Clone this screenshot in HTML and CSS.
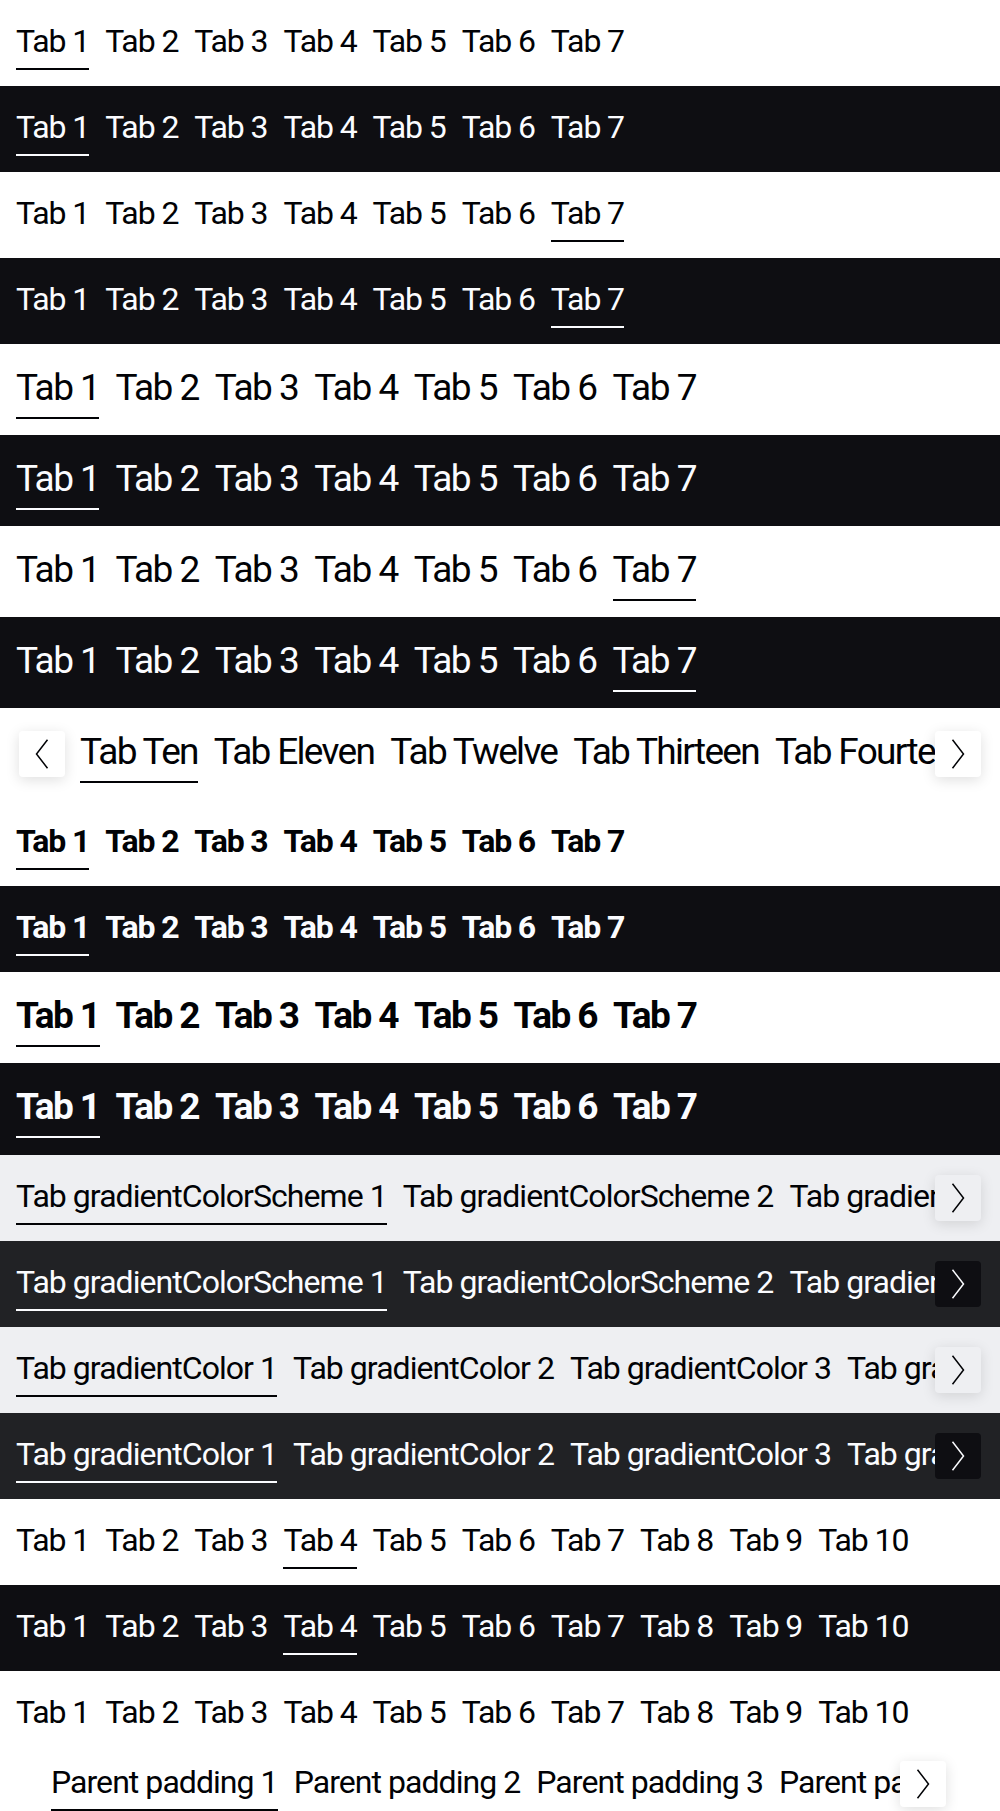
FILE: index.html
```html
<!DOCTYPE html>
<html lang="en">
<head>
<meta charset="utf-8">
<title>Tabs Bar</title>
<link rel="stylesheet" href="styles.css">
</head>
<body>

<div class="row light"><div class="bar small"><span class="tab active">Tab 1</span><span class="tab">Tab 2</span><span class="tab">Tab 3</span><span class="tab">Tab 4</span><span class="tab">Tab 5</span><span class="tab">Tab 6</span><span class="tab">Tab 7</span></div></div>
<div class="row dark"><div class="bar small"><span class="tab active">Tab 1</span><span class="tab">Tab 2</span><span class="tab">Tab 3</span><span class="tab">Tab 4</span><span class="tab">Tab 5</span><span class="tab">Tab 6</span><span class="tab">Tab 7</span></div></div>
<div class="row light"><div class="bar small"><span class="tab">Tab 1</span><span class="tab">Tab 2</span><span class="tab">Tab 3</span><span class="tab">Tab 4</span><span class="tab">Tab 5</span><span class="tab">Tab 6</span><span class="tab active">Tab 7</span></div></div>
<div class="row dark"><div class="bar small"><span class="tab">Tab 1</span><span class="tab">Tab 2</span><span class="tab">Tab 3</span><span class="tab">Tab 4</span><span class="tab">Tab 5</span><span class="tab">Tab 6</span><span class="tab active">Tab 7</span></div></div>

<div class="row light"><div class="bar medium"><span class="tab active">Tab 1</span><span class="tab">Tab 2</span><span class="tab">Tab 3</span><span class="tab">Tab 4</span><span class="tab">Tab 5</span><span class="tab">Tab 6</span><span class="tab">Tab 7</span></div></div>
<div class="row dark"><div class="bar medium"><span class="tab active">Tab 1</span><span class="tab">Tab 2</span><span class="tab">Tab 3</span><span class="tab">Tab 4</span><span class="tab">Tab 5</span><span class="tab">Tab 6</span><span class="tab">Tab 7</span></div></div>
<div class="row light"><div class="bar medium"><span class="tab">Tab 1</span><span class="tab">Tab 2</span><span class="tab">Tab 3</span><span class="tab">Tab 4</span><span class="tab">Tab 5</span><span class="tab">Tab 6</span><span class="tab active">Tab 7</span></div></div>
<div class="row dark"><div class="bar medium"><span class="tab">Tab 1</span><span class="tab">Tab 2</span><span class="tab">Tab 3</span><span class="tab">Tab 4</span><span class="tab">Tab 5</span><span class="tab">Tab 6</span><span class="tab active">Tab 7</span></div></div>

<div class="row light scroll both tall">
  <button class="scroll-btn btn-white" type="button" aria-label="Previous"><svg width="14" height="30" viewBox="0 0 14 30"><path d="M12.5 0.8 L1.5 15 L12.5 29.2" fill="none" stroke="currentColor" stroke-width="1.5"/></svg></button>
  <div class="viewport viewport-offset"><div class="bar medium words"><span class="tab active">Tab Ten</span><span class="tab">Tab Eleven</span><span class="tab">Tab Twelve</span><span class="tab">Tab Thirteen</span><span class="tab">Tab Fourteen</span><span class="tab">Tab Fifteen</span></div></div>
  <button class="scroll-btn btn-white" type="button" aria-label="Next"><svg width="14" height="30" viewBox="0 0 14 30"><path d="M1.5 0.8 L12.5 15 L1.5 29.2" fill="none" stroke="currentColor" stroke-width="1.5"/></svg></button>
</div>

<div class="row light"><div class="bar small bold"><span class="tab active">Tab 1</span><span class="tab">Tab 2</span><span class="tab">Tab 3</span><span class="tab">Tab 4</span><span class="tab">Tab 5</span><span class="tab">Tab 6</span><span class="tab">Tab 7</span></div></div>
<div class="row dark"><div class="bar small bold"><span class="tab active">Tab 1</span><span class="tab">Tab 2</span><span class="tab">Tab 3</span><span class="tab">Tab 4</span><span class="tab">Tab 5</span><span class="tab">Tab 6</span><span class="tab">Tab 7</span></div></div>
<div class="row light"><div class="bar medium bold"><span class="tab active">Tab 1</span><span class="tab">Tab 2</span><span class="tab">Tab 3</span><span class="tab">Tab 4</span><span class="tab">Tab 5</span><span class="tab">Tab 6</span><span class="tab">Tab 7</span></div></div>
<div class="row dark tall"><div class="bar medium bold"><span class="tab active">Tab 1</span><span class="tab">Tab 2</span><span class="tab">Tab 3</span><span class="tab">Tab 4</span><span class="tab">Tab 5</span><span class="tab">Tab 6</span><span class="tab">Tab 7</span></div></div>

<div class="row surface-light scroll right">
  <div class="viewport"><div class="bar small long"><span class="tab active">Tab gradientColorScheme 1</span><span class="tab">Tab gradientColorScheme 2</span><span class="tab">Tab gradientColorScheme 3</span><span class="tab">Tab gradientColorScheme 4</span></div></div>
  <button class="scroll-btn btn-surface-light" type="button" aria-label="Next"><svg width="14" height="30" viewBox="0 0 14 30"><path d="M1.5 0.8 L12.5 15 L1.5 29.2" fill="none" stroke="currentColor" stroke-width="1.5"/></svg></button>
</div>
<div class="row surface-dark scroll right">
  <div class="viewport"><div class="bar small long"><span class="tab active">Tab gradientColorScheme 1</span><span class="tab">Tab gradientColorScheme 2</span><span class="tab">Tab gradientColorScheme 3</span><span class="tab">Tab gradientColorScheme 4</span></div></div>
  <button class="scroll-btn btn-dark" type="button" aria-label="Next"><svg width="14" height="30" viewBox="0 0 14 30"><path d="M1.5 0.8 L12.5 15 L1.5 29.2" fill="none" stroke="currentColor" stroke-width="1.5"/></svg></button>
</div>
<div class="row surface-light scroll right">
  <div class="viewport"><div class="bar small long"><span class="tab active">Tab gradientColor 1</span><span class="tab">Tab gradientColor 2</span><span class="tab">Tab gradientColor 3</span><span class="tab">Tab gradientColor 4</span></div></div>
  <button class="scroll-btn btn-surface-light" type="button" aria-label="Next"><svg width="14" height="30" viewBox="0 0 14 30"><path d="M1.5 0.8 L12.5 15 L1.5 29.2" fill="none" stroke="currentColor" stroke-width="1.5"/></svg></button>
</div>
<div class="row surface-dark scroll right">
  <div class="viewport"><div class="bar small long"><span class="tab active">Tab gradientColor 1</span><span class="tab">Tab gradientColor 2</span><span class="tab">Tab gradientColor 3</span><span class="tab">Tab gradientColor 4</span></div></div>
  <button class="scroll-btn btn-dark" type="button" aria-label="Next"><svg width="14" height="30" viewBox="0 0 14 30"><path d="M1.5 0.8 L12.5 15 L1.5 29.2" fill="none" stroke="currentColor" stroke-width="1.5"/></svg></button>
</div>

<div class="row light"><div class="bar small"><span class="tab">Tab 1</span><span class="tab">Tab 2</span><span class="tab">Tab 3</span><span class="tab active">Tab 4</span><span class="tab">Tab 5</span><span class="tab">Tab 6</span><span class="tab">Tab 7</span><span class="tab">Tab 8</span><span class="tab">Tab 9</span><span class="tab">Tab 10</span></div></div>
<div class="row dark"><div class="bar small"><span class="tab">Tab 1</span><span class="tab">Tab 2</span><span class="tab">Tab 3</span><span class="tab active">Tab 4</span><span class="tab">Tab 5</span><span class="tab">Tab 6</span><span class="tab">Tab 7</span><span class="tab">Tab 8</span><span class="tab">Tab 9</span><span class="tab">Tab 10</span></div></div>
<div class="row light"><div class="bar small"><span class="tab">Tab 1</span><span class="tab">Tab 2</span><span class="tab">Tab 3</span><span class="tab">Tab 4</span><span class="tab">Tab 5</span><span class="tab">Tab 6</span><span class="tab">Tab 7</span><span class="tab">Tab 8</span><span class="tab">Tab 9</span><span class="tab">Tab 10</span></div></div>

<div class="row light scroll parent">
  <div class="viewport"><div class="bar small long"><span class="tab active">Parent padding 1</span><span class="tab">Parent padding 2</span><span class="tab">Parent padding 3</span><span class="tab">Parent padding 4</span></div></div>
  <button class="scroll-btn btn-white" type="button" aria-label="Next"><svg width="14" height="30" viewBox="0 0 14 30"><path d="M1.5 0.8 L12.5 15 L1.5 29.2" fill="none" stroke="currentColor" stroke-width="1.5"/></svg></button>
</div>

</body>
</html>
```

FILE: styles.css
```css
* {
  box-sizing: border-box;
}

html, body {
  margin: 0;
  padding: 0;
}

body {
  width: 1000px;
  font-family: Roboto, "Noto Sans", "Liberation Sans", sans-serif;
  background: #ffffff;
  overflow: hidden;
}

.row {
  padding: 16px;
}

.row.tall {
  padding-bottom: 17px;
}

.light {
  background: #ffffff;
  color: #010205;
}

.dark {
  background: #0e0e12;
  color: #fbfcff;
}

.surface-light {
  background: #eeeff2;
  color: #010205;
}

.surface-dark {
  background: #212225;
  color: #fbfcff;
}

.bar {
  display: flex;
  gap: 16px;
}

.tab {
  flex-shrink: 0;
  white-space: nowrap;
  border-bottom: 2px solid transparent;
}

.tab.active {
  border-bottom-color: currentColor;
}

.bar.small .tab {
  font-size: 32px;
  line-height: 50px;
  letter-spacing: -1.1px;
  padding-bottom: 2px;
}

.bar.small.long .tab {
  letter-spacing: -0.95px;
}

.bar.medium .tab {
  font-size: 37px;
  line-height: 56px;
  letter-spacing: -1.5px;
  padding-bottom: 1px;
}

.bar.medium.words .tab {
  letter-spacing: -1.7px;
}

.bar.bold .tab {
  font-weight: 700;
}

.bar.small.bold .tab {
  letter-spacing: -1.15px;
}

.bar.medium.bold .tab {
  letter-spacing: -1.55px;
}

/* scrolling rows */
.scroll {
  display: flex;
  align-items: center;
}

.scroll.both {
  padding-left: 19px;
  padding-right: 19px;
}

.scroll.right {
  padding-left: 16px;
  padding-right: 19px;
}

.scroll.parent {
  padding: 0 54px 0 51px;
}

.viewport {
  flex: 1;
  min-width: 0;
  overflow: hidden;
}

.viewport-offset {
  padding-left: 15px;
}

.scroll-btn {
  flex-shrink: 0;
  width: 46px;
  height: 46px;
  padding: 0;
  margin: 0;
  border: 0;
  border-radius: 4px;
  display: flex;
  align-items: center;
  justify-content: center;
  color: inherit;
  cursor: pointer;
}

.btn-white {
  background: #ffffff;
  box-shadow: 0 3px 14px rgba(0, 0, 0, 0.13);
}

.btn-surface-light {
  background: #eeeff2;
  box-shadow: 0 3px 14px rgba(0, 0, 0, 0.12);
}

.btn-dark {
  background: #0e0e12;
}

.scroll-btn svg {
  display: block;
}
```
